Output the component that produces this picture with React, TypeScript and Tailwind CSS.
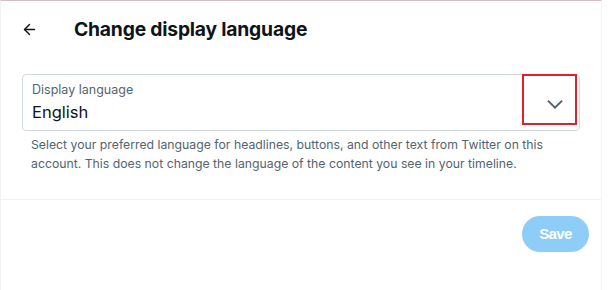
import { ArrowLeft } from 'lucide-react'

export default function App() {
  return (
    <div className="h-[290px] w-[615px] bg-white font-['Inter',sans-serif] text-[#0f1419]">
      <div className="h-[290px] w-[602px] border-t border-t-[#d6bcc4] border-x border-x-[#eff3f4]">
        {/* Header */}
        <div className="flex h-[56px] items-center px-[20px]">
          <ArrowLeft className="h-[17px] w-[17px] text-[#0f1419]" strokeWidth={2} />
          <h1 className="ml-[36px] text-[19.3px] font-bold tracking-[-0.2px]">Change display language</h1>
        </div>

        {/* Select */}
        <div className="mt-[17px] px-[21px]">
          <div className="relative h-[57px] w-[558px] rounded-[4px] border border-[#cfd9de] px-[9px] pt-[7px]">
            <div className="text-[12.5px] leading-[16px] text-[#536471]">Display language</div>
            <div className="mt-[3px] text-[16.5px] leading-[22px]">English</div>
            <svg
              viewBox="0 0 24 24"
              className="absolute right-[13px] top-[18px] h-[22px] w-[22px] fill-[#536471]"
            >
              <path d="M3.543 8.96l1.414-1.42L12 14.59l7.043-7.05 1.414 1.42L12 17.41 3.543 8.96z" />
            </svg>
            <div className="absolute right-[2px] top-[-1px] h-[51px] w-[55px] border-2 border-[#e0202b]" />
          </div>
          <p className="mt-[4px] px-[9px] text-[12.25px] leading-[19px] text-[#536471]">
            Select your preferred language for headlines, buttons, and other text from Twitter on this
            account. This does not change the language of the content you see in your timeline.
          </p>
        </div>

        {/* Footer */}
        <div className="mt-[26px] border-t border-[#eff3f4]">
          <div className="flex justify-end px-[12px] pt-[16px]">
            <button className="h-[36px] w-[67px] rounded-full bg-[#8ecdf8] font-['Liberation_Sans',sans-serif] text-[15px] font-bold tracking-[-0.6px] text-white">
              Save
            </button>
          </div>
        </div>
      </div>
    </div>
  )
}
